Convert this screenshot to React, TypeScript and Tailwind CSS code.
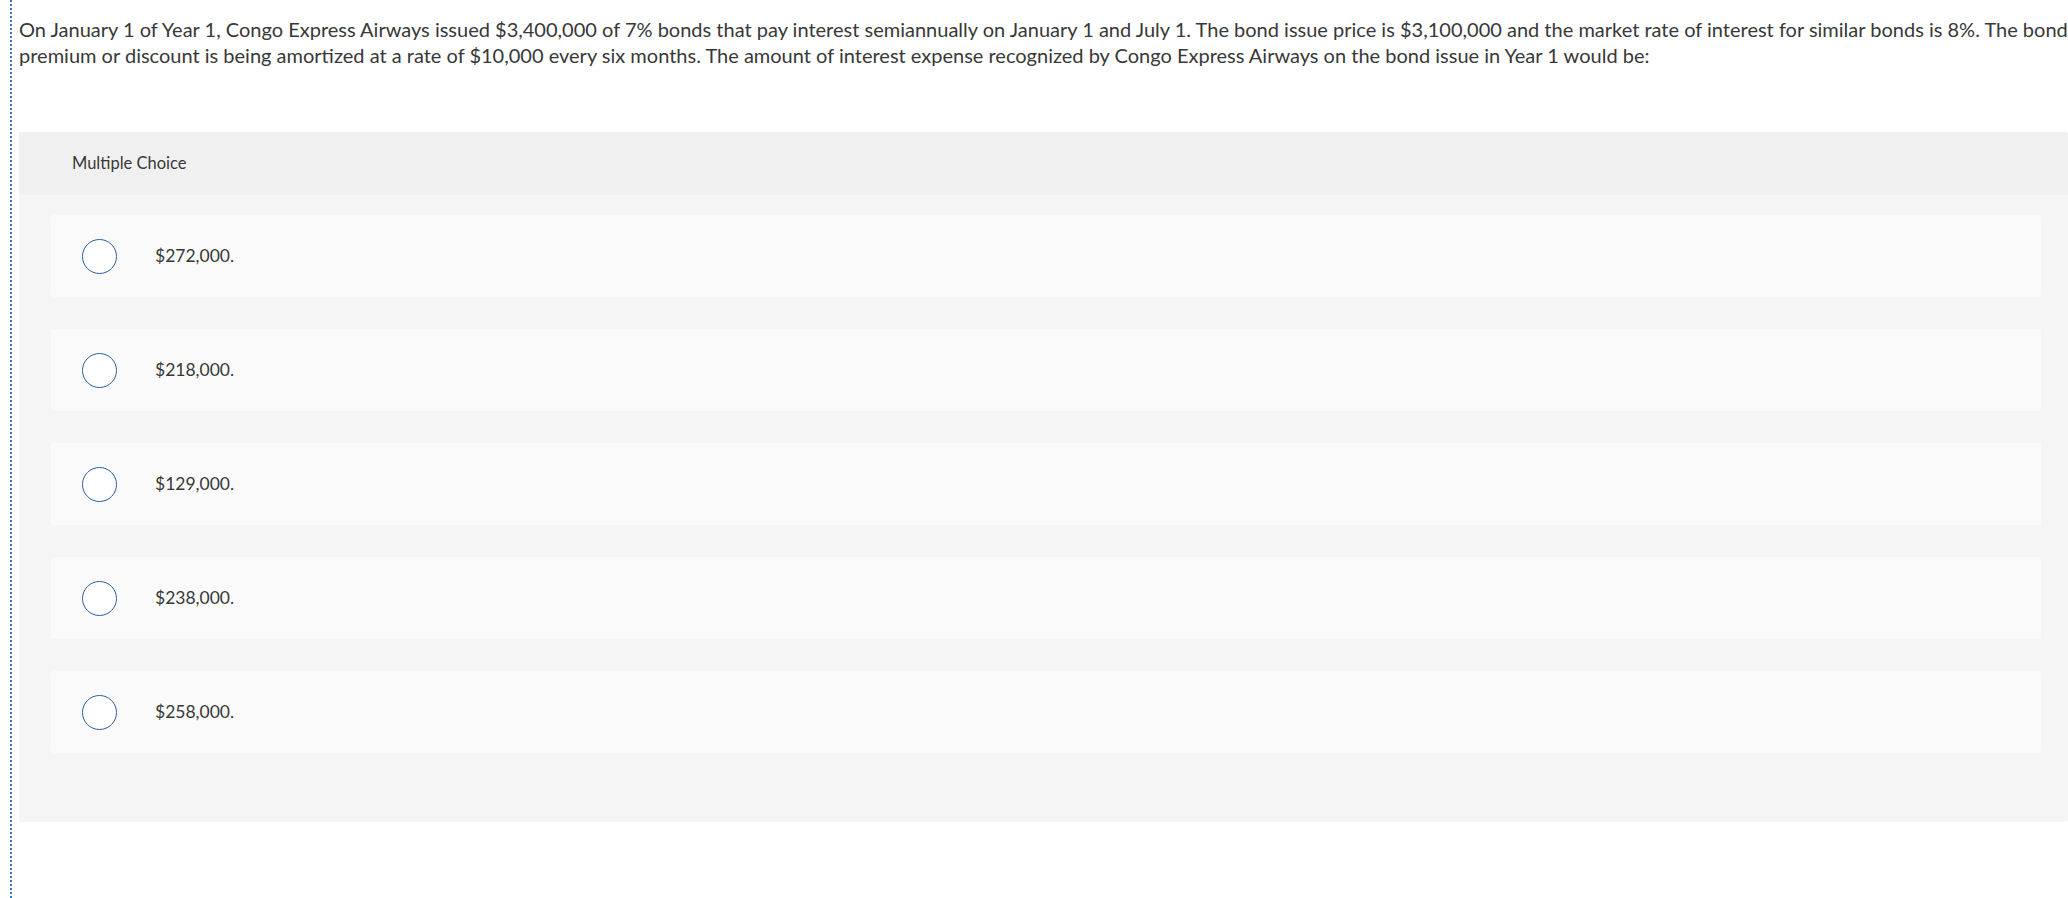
const choices = ['$272,000.', '$218,000.', '$129,000.', '$238,000.', '$258,000.'];

function ChoiceRow({ label }: { label: string }) {
  return (
    <div className="flex h-[82px] items-center rounded-[3px] bg-[#fafafa] pl-[31px]">
      <span className="h-[35px] w-[35px] shrink-0 rounded-full border-[1.5px] border-[#2a5f9e] bg-white" />
      <span className="ml-[38px] text-[17.5px] text-[#383838]">{label}</span>
    </div>
  );
}

export default function App() {
  return (
    <div
      className="min-h-[898px] bg-white"
      style={{ fontFamily: 'Lato, "Open Sans", Arial, sans-serif' }}
    >
      <div className="ml-[10px] min-h-[898px] border-l-2 border-dotted border-[#3b73c4] pl-[7px]">
        <p className="pt-[16px] text-[20px] leading-[26px] text-[#383838]">
          On January 1 of Year 1, Congo Express Airways issued $3,400,000 of 7% bonds that pay interest semiannually on January 1 and July 1. The bond issue price is $3,100,000 and the market rate of interest for similar bonds is 8%. The bond premium or discount is being amortized at a rate of $10,000 every six months. The amount of interest expense recognized by Congo Express Airways on the bond issue in Year 1 would be:
        </p>

        {/* Multiple choice panel */}
        <div className="mt-[64px] overflow-hidden rounded-[3px] bg-[#f5f5f5]">
          <div className="flex h-[63px] items-center bg-[#f0f0f0] pl-[53px] text-[16.5px] text-[#383838]">
            Multiple Choice
          </div>
          <div className="flex flex-col gap-[32px] pb-[69px] pl-[32px] pr-[27px] pt-[20px]">
            {choices.map((c) => (
              <ChoiceRow key={c} label={c} />
            ))}
          </div>
        </div>
      </div>
    </div>
  );
}
